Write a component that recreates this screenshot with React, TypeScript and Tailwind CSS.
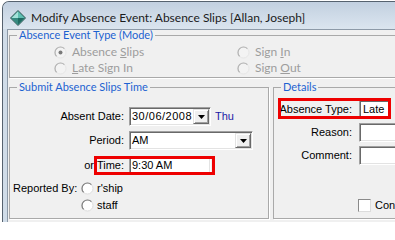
import React from "react";

function Radio({ checked = false, disabled = false }: { checked?: boolean; disabled?: boolean }) {
  const dark = disabled ? "#b2b2b2" : "#7d7d7d";
  return (
    <svg width="13" height="13" viewBox="0 0 13 13" className="shrink-0">
      <circle cx="6.5" cy="6.5" r="5.5" fill={disabled ? "#f3f3f3" : "#ffffff"} stroke={disabled ? "#e6e6e6" : "#dcdcdc"} strokeWidth="1" />
      <path d="M10.4 2.6 A5.5 5.5 0 0 0 2.6 10.4" stroke={dark} strokeWidth="1.2" fill="none" />
      {checked && <circle cx="6.5" cy="6.5" r="2" fill="#7a7a7a" />}
    </svg>
  );
}

function Gem() {
  return (
    <svg width="16" height="16" viewBox="0 0 16 16" className="shrink-0">
      <polygon points="8,0.5 15.5,8 8,15.5 0.5,8" fill="#3b9d92" stroke="#3d5b59" strokeWidth="1" />
      <polygon points="8,1.6 8,8 1.6,8" fill="#a4e2d9" />
      <polygon points="8,1.6 14.4,8 8,8" fill="#5fbfb2" />
      <polygon points="14.4,8 8,14.4 8,8" fill="#1f6a62" />
      <polygon points="1.6,8 8,14.4 8,8" fill="#35897f" />
    </svg>
  );
}

function Field({ className = "", children }: { className?: string; children?: React.ReactNode }) {
  return (
    <div
      className={
        "bg-white border border-t-[#a0a0a0] border-l-[#a0a0a0] border-r-white border-b-white shadow-[inset_1px_1px_0_#696969,inset_-1px_-1px_0_#e3e3e3] flex items-center shrink-0 " +
        className
      }
    >
      {children}
    </div>
  );
}

function DropBtn() {
  return (
    <div className="ml-auto mr-[1px] w-[16px] h-[15px] bg-[#f0f0f0] border border-t-[#e3e3e3] border-l-[#e3e3e3] border-r-[#696969] border-b-[#696969] shadow-[inset_1px_1px_0_#fff,inset_-1px_-1px_0_#a0a0a0] flex items-center justify-center shrink-0">
      <svg width="7" height="4" viewBox="0 0 7 4">
        <path d="M0 0H7L3.5 4Z" fill="#000" />
      </svg>
    </div>
  );
}

export default function App() {
  return (
    <div className="w-[395px] h-[222px] overflow-hidden bg-white pl-[2px] pt-[1px]">
      <div className="w-[430px] h-[240px] rounded-tl-[7px] border-l border-t border-[#56626f] bg-[#d0dce8] flex flex-col">
        {/* title bar */}
        <div className="h-[27px] shrink-0 rounded-tl-[6px] bg-gradient-to-b from-[#c2d0e0] to-[#dbe5ef] flex items-center pl-[7px] pt-[5px] gap-[5px]">
          <Gem />
          <span className="font-['Lato',sans-serif] text-[12px] leading-[16px] text-[#1b1b1b] whitespace-nowrap">
            Modify Absence Event: Absence Slips [Allan, Joseph]
          </span>
        </div>

        {/* client area */}
        <div className="ml-[4px] flex-1 border-l border-t border-[#8d9aa8] bg-[#f0f0f0] flex flex-col">
          {/* Group 1 */}
          <fieldset className="-mt-px ml-px w-[420px] h-[49px] border border-[#a9a9a9] shadow-[1px_1px_0_#fff] min-w-0">
            <legend className="ml-[7px] px-[2px] h-[12px] leading-[12px] text-[11px] font-['Lato',sans-serif] text-[#1c62d1] whitespace-nowrap">
              Absence Event Type (Mode)
            </legend>
            <div className="pt-[3px] pl-[44px] grid grid-cols-[183px_1fr] font-['Lato',sans-serif] text-[12px] leading-[14px] text-[#9d9d9d]">
              <div className="h-[16px] flex items-center gap-[5px]">
                <Radio checked disabled />
                <span>
                  Absence <span className="underline underline-offset-1">S</span>lips
                </span>
              </div>
              <div className="h-[16px] flex items-center gap-[5px]">
                <Radio disabled />
                <span>
                  Sign <span className="underline underline-offset-1">I</span>n
                </span>
              </div>
              <div className="h-[16px] flex items-center gap-[5px]">
                <Radio disabled />
                <span>
                  <span className="underline underline-offset-1">L</span>ate Sign In
                </span>
              </div>
              <div className="h-[16px] flex items-center gap-[5px]">
                <Radio disabled />
                <span>
                  Sign <span className="underline underline-offset-1">O</span>ut
                </span>
              </div>
            </div>
          </fieldset>

          {/* Groups 2 & 3 */}
          <div className="flex ml-px mt-[3px] gap-[4px]">
            <fieldset className="w-[260px] h-[138px] shrink-0 border border-[#a9a9a9] shadow-[1px_1px_0_#fff] min-w-0">
              <legend className="ml-[7px] px-[2px] h-[12px] leading-[12px] text-[11px] font-['Lato',sans-serif] text-[#1c62d1] whitespace-nowrap">
                Submit Absence Slips Time
              </legend>
              <div className="flex flex-col font-['Liberation_Sans',Arial,sans-serif] text-[11px] leading-[13px] text-black">
                <div className="mt-[14px] h-[19px] flex items-center">
                  <span className="w-[114px] text-right shrink-0">Absent Date:</span>
                  <Field className="ml-[5px] w-[82px] h-[19px]">
                    <span className="pl-[2px] tracking-[0.5px]">30/06/2008</span>
                    <DropBtn />
                  </Field>
                  <span className="ml-[4px] text-[#1a1aa6]">Thu</span>
                </div>
                <div className="mt-[5px] h-[19px] flex items-center">
                  <span className="w-[114px] text-right shrink-0">Period:</span>
                  <Field className="ml-[5px] w-[124px] h-[19px]">
                    <span className="pl-[2px]">AM</span>
                    <DropBtn />
                  </Field>
                </div>
                <div className="relative mt-[6px] h-[19px] flex items-center">
                  <span className="w-[114px] flex justify-end shrink-0">
                    <span>or</span>
                    <span className="ml-[3px]">Time:</span>
                  </span>
                  <Field className="ml-[5px] w-[82px] h-[19px]">
                    <span className="pl-[2px]">9:30 AM</span>
                  </Field>
                  <div className="absolute left-[84px] top-0 w-[121px] h-[19px] border-[3px] border-[#ee0000]" />
                </div>
                <div className="mt-[5px] h-[16px] flex items-center">
                  <span className="w-[71px] pl-[3px] shrink-0 whitespace-nowrap">Reported By:</span>
                  <Radio />
                  <span className="ml-[3px]">r'ship</span>
                </div>
                <div className="mt-[1px] h-[16px] flex items-center pl-[71px]">
                  <Radio />
                  <span className="ml-[3px]">staff</span>
                </div>
              </div>
            </fieldset>

            <fieldset className="w-[200px] h-[138px] shrink-0 border border-[#a9a9a9] shadow-[1px_1px_0_#fff] min-w-0">
              <legend className="ml-[7px] px-[2px] h-[12px] leading-[12px] text-[11px] font-['Lato',sans-serif] text-[#1c62d1] whitespace-nowrap">
                Details
              </legend>
              <div className="flex flex-col font-['Liberation_Sans',Arial,sans-serif] text-[11px] leading-[13px] text-black">
                <div className="relative mt-[7px] h-[19px] flex items-center">
                  <span className="w-[78px] text-right shrink-0 whitespace-nowrap">Absence Type:</span>
                  <Field className="ml-[7px] w-[31px] h-[19px]">
                    <span className="pl-[3px]">Late</span>
                  </Field>
                  <div className="absolute left-[4px] -top-[2px] w-[113px] h-[21px] border-[3px] border-[#ee0000]" />
                </div>
                <div className="mt-[4px] h-[19px] flex items-center">
                  <span className="w-[78px] text-right shrink-0">Reason:</span>
                  <Field className="ml-[7px] w-[80px] h-[19px]" />
                </div>
                <div className="mt-[4px] h-[19px] flex items-center">
                  <span className="w-[78px] text-right shrink-0">Comment:</span>
                  <Field className="ml-[7px] w-[80px] h-[19px]" />
                </div>
                <div className="mt-[34px] h-[13px] flex items-center pl-[84px]">
                  <div className="w-[13px] h-[13px] bg-white border border-t-[#8a8a8a] border-l-[#8a8a8a] border-r-[#dcdcdc] border-b-[#dcdcdc] shrink-0" />
                  <span className="ml-[4px] whitespace-nowrap">Confirmed</span>
                </div>
              </div>
            </fieldset>
          </div>
        </div>
      </div>
    </div>
  );
}
